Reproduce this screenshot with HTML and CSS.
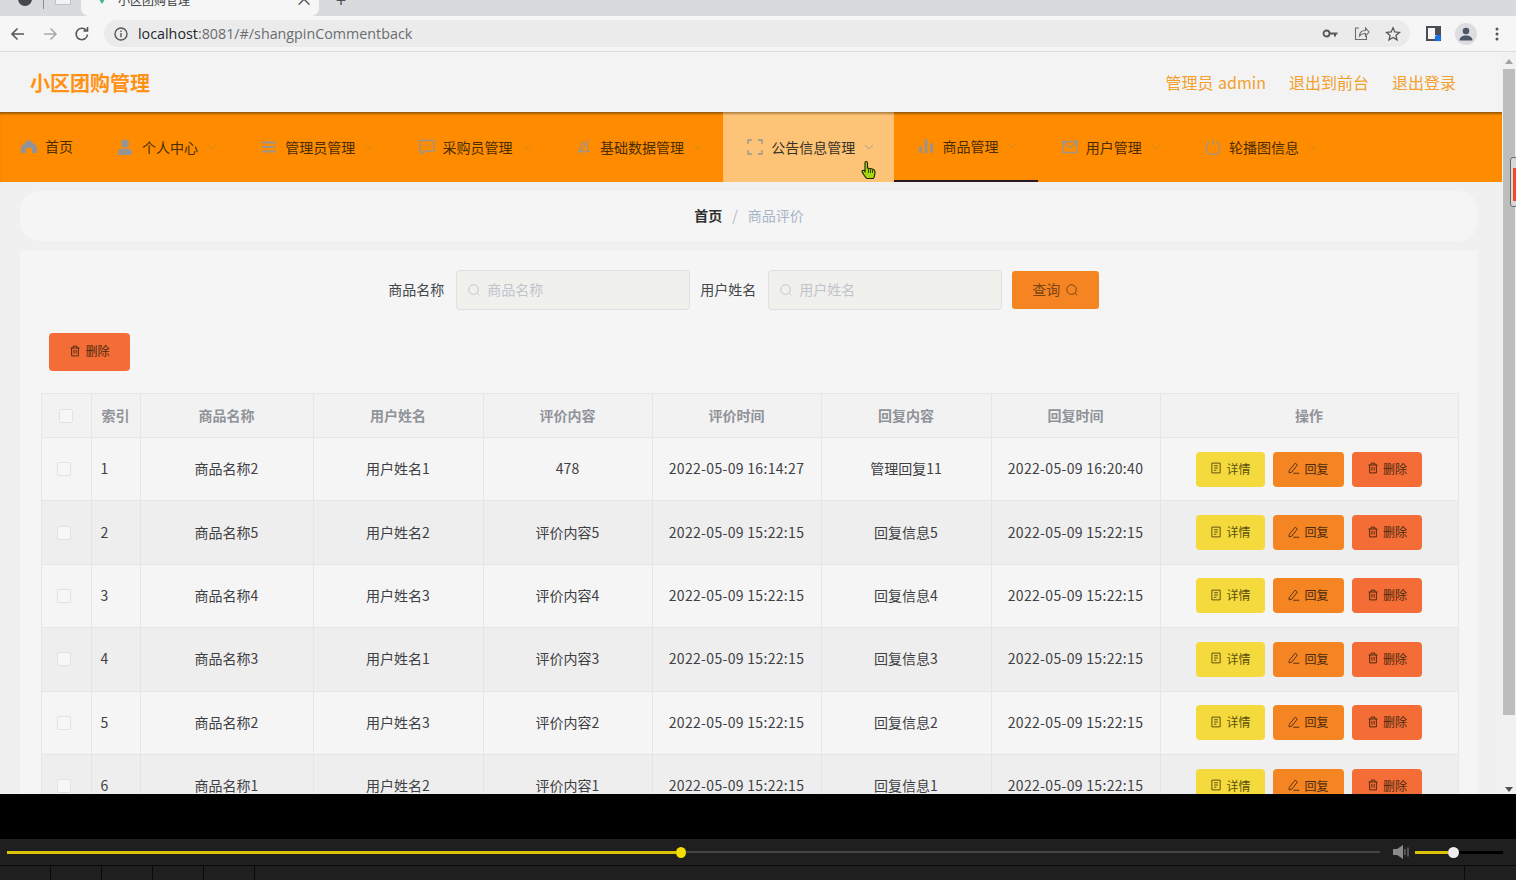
FILE: index.html
```html
<!DOCTYPE html>
<html lang="zh-CN">
<head>
<meta charset="utf-8">
<title>小区团购管理</title>
<link rel="stylesheet" href="styles.css">
</head>
<body>
<svg class="defs" width="0" height="0" aria-hidden="true">
  <symbol id="i-trash" viewBox="0 0 16 16"><path d="M2 4h12M5.500 4V1.500h5V4M3.500 4v10.500h9V4M6.500 6.500v5M9.500 6.500v5" fill="none" stroke="currentColor" stroke-width="1.300"/></symbol>
  <symbol id="i-doc" viewBox="0 0 16 16"><path d="M2.500 1.500h11v13h-11zM5.500 5h5M5.500 8h5M5.500 11h3" fill="none" stroke="currentColor" stroke-width="1.300"/></symbol>
  <symbol id="i-edit" viewBox="0 0 16 16"><path d="M1.500 11.500 9.500 1.500l3 2.500-7.500 9.500-3.500 1zM7 15h8" fill="none" stroke="currentColor" stroke-width="1.200"/></symbol>
  <symbol id="i-search" viewBox="0 0 16 16"><path d="M7.500 2a5.500 5.500 0 1 1 0 11 5.500 5.500 0 0 1 0-11zM11.500 11.500 14 14" fill="none" stroke="currentColor" stroke-width="1.100"/></symbol>
  <symbol id="i-chev" viewBox="0 0 10 6"><path d="M1 1l4 4 4-4" fill="none" stroke="currentColor" stroke-width="1"/></symbol>
</svg>

<div class="tabstrip">
  <svg class="strip-ico" width="16" height="16" viewBox="0 0 16 16"><circle cx="8" cy="-1" r="7" fill="#45484c"/></svg>
  <span class="strip-sep"></span>
  <span class="strip-page"></span>
  <div class="tab">
    <svg width="12" height="10" viewBox="0 0 12 10"><path d="M1 0h10L6 8z" fill="#41b883"/></svg>
    <span class="tab-title">小区团购管理</span>
    <span class="tab-x">×</span>
  </div>
  <span class="tab-plus">+</span>
</div>

<div class="toolbar">
  <svg class="tb-ico" width="18" height="18" viewBox="0 0 18 18"><path d="M15 9H3.500M8.500 3.500 3 9l5.500 5.500" fill="none" stroke="#55585c" stroke-width="1.600"/></svg>
  <svg class="tb-ico" width="18" height="18" viewBox="0 0 18 18"><path d="M3 9h11.500M9.500 3.500 15 9l-5.500 5.500" fill="none" stroke="#a8aaad" stroke-width="1.600"/></svg>
  <svg class="tb-ico" width="18" height="18" viewBox="0 0 18 18"><path d="M14.500 9.500a5.700 5.700 0 1 1-1.300-4.200M14.500 2v4h-4" fill="none" stroke="#55585c" stroke-width="1.600"/></svg>
  <div class="omnibox">
    <svg width="16" height="16" viewBox="0 0 16 16"><circle cx="8" cy="8" r="6" fill="none" stroke="#55585c" stroke-width="1.400"/><path d="M8 7v4.200M8 4.500v1.400" stroke="#55585c" stroke-width="1.400"/></svg>
    <span class="url"><span class="url-host">localhost</span>:8081/#/shangpinCommentback</span>
    <svg class="omni-key" width="16" height="16" viewBox="0 0 16 16"><path d="M7 6.500h8.500v2h-1.500v2h-2v-2H7z" fill="#55585c"/><circle cx="4.500" cy="7.500" r="3" fill="none" stroke="#55585c" stroke-width="1.800"/></svg>
    <svg class="omni-share" width="17" height="17" viewBox="0 0 17 17"><path d="M6 3H2.500v11.500h11V11M6.500 11c0-3.500 2.500-5.500 6-5.500V3l3.500 4-3.500 4V8.500C9.500 8.500 7.500 9.500 6.500 11z" fill="none" stroke="#6a6d71" stroke-width="1.100"/></svg>
    <svg class="omni-star" width="16" height="16" viewBox="0 0 16 16"><path d="M8 1.800 9.800 6l4.600.4-3.500 3 1.100 4.500L8 11.500l-4 2.400 1.100-4.500-3.500-3L6.200 6z" fill="none" stroke="#55585c" stroke-width="1.300"/></svg>
  </div>
  <div class="tb-right">
    <svg width="16" height="16" viewBox="0 0 16 16"><path d="M1 1h13v13H1z" fill="none" stroke="#4a4d51" stroke-width="2"/><path d="M9 1h5v8H9z" fill="#4a4d51"/><circle cx="12" cy="12" r="3.200" fill="#1a73e8"/></svg>
    <span class="avatar"><svg width="16" height="16" viewBox="0 0 16 16"><circle cx="8" cy="5" r="3.300" fill="#4d5666"/><path d="M1.500 14.500c0-3.500 3-5 6.500-5s6.500 1.500 6.500 5z" fill="#4d5666"/></svg></span>
    <svg width="4" height="14" viewBox="0 0 4 14"><circle cx="2" cy="2" r="1.500" fill="#55585c"/><circle cx="2" cy="7" r="1.500" fill="#55585c"/><circle cx="2" cy="12" r="1.500" fill="#55585c"/></svg>
  </div>
</div>

<div class="viewport">
  <div class="page">
    <header class="topbar">
      <div class="brand">小区团购管理</div>
      <div class="top-links">
        <span>管理员 admin</span>
        <span>退出到前台</span>
        <span>退出登录</span>
      </div>
    </header>

    <nav class="nav">
      <div class="nav-item nav-home">
        <svg class="nav-ico" viewBox="0 0 16 16"><path d="M8 1.500 16 8.500v6.500h-5v-5H5v5H0V8.500z" fill="currentColor"/></svg>
        <span class="nav-text">首页</span>
      </div>
      <div class="nav-item">
        <svg class="nav-ico" viewBox="0 0 16 16"><circle cx="7" cy="4.500" r="4" fill="currentColor"/><path d="M0 16v-3c0-2 2-3.500 4-3.500h6c2 0 4 1.500 4 3.500v3z" fill="currentColor"/></svg>
        <span class="nav-text">个人中心</span>
        <svg class="chev"><use href="#i-chev"/></svg>
      </div>
      <div class="nav-item">
        <svg class="nav-ico" viewBox="0 0 16 16"><path d="M1 2.500h14v2H1zM1 7h10v2H1zM1 11.500h14v2H1zM12 6l3 2-3 2z" fill="currentColor"/></svg>
        <span class="nav-text">管理员管理</span>
        <svg class="chev"><use href="#i-chev"/></svg>
      </div>
      <div class="nav-item">
        <svg class="nav-ico" viewBox="0 0 16 16"><path d="M1 1.500h14v10.500H6L2.500 15v-3H1z" fill="none" stroke="currentColor" stroke-width="1.300"/><path d="M4.500 6.500h1.200M7.400 6.500h1.200M10.300 6.500h1.200" stroke="currentColor" stroke-width="1.300"/></svg>
        <span class="nav-text">采购员管理</span>
        <svg class="chev"><use href="#i-chev"/></svg>
      </div>
      <div class="nav-item">
        <svg class="nav-ico" viewBox="0 0 16 16"><path d="M3 12.500c1.500-1.500 1.500-3 1.500-5 0-2.500 1.500-4.500 3.500-4.500s3.500 2 3.500 4.500c0 2 0 3.500 1.500 5zM6.500 14.500h3M2.500 15 13 1" fill="none" stroke="currentColor" stroke-width="1.200"/></svg>
        <span class="nav-text">基础数据管理</span>
        <svg class="chev"><use href="#i-chev"/></svg>
      </div>
      <div class="nav-item nav-hover">
        <svg class="nav-ico" viewBox="0 0 16 16"><path d="M1 5V1h4M11 1h4v4M15 11v4h-4M5 15H1v-4" fill="none" stroke="currentColor" stroke-width="1.300"/></svg>
        <span class="nav-text">公告信息管理</span>
        <svg class="chev"><use href="#i-chev"/></svg>
      </div>
      <div class="nav-item nav-active">
        <svg class="nav-ico" viewBox="0 0 16 16"><path d="M1 8h3v7H1zM6.500 1.500h3V15h-3zM12 5h3v10h-3z" fill="currentColor"/></svg>
        <span class="nav-text">商品管理</span>
        <svg class="chev"><use href="#i-chev"/></svg>
      </div>
      <div class="nav-item">
        <svg class="nav-ico" viewBox="0 0 16 16"><path d="M.7 2.500h14.600v11H.7zM1 3l7 6 7-6" fill="none" stroke="currentColor" stroke-width="1.300"/></svg>
        <span class="nav-text">用户管理</span>
        <svg class="chev"><use href="#i-chev"/></svg>
      </div>
      <div class="nav-item">
        <svg class="nav-ico" viewBox="0 0 16 16"><path d="M5 2.500a7 7 0 1 0 6 0M8 .5v6" fill="none" stroke="currentColor" stroke-width="1.300"/></svg>
        <span class="nav-text">轮播图信息</span>
        <svg class="chev"><use href="#i-chev"/></svg>
      </div>
    </nav>

    <main class="main">
      <div class="crumbs"><b>首页</b><i>/</i><span>商品评价</span></div>
      <section class="panel">
        <form class="search">
          <label>商品名称</label>
          <div class="field"><svg><use href="#i-search"/></svg><span>商品名称</span></div>
          <label>用户姓名</label>
          <div class="field"><svg><use href="#i-search"/></svg><span>用户姓名</span></div>
          <div class="query"><span>查询</span><svg><use href="#i-search"/></svg></div>
        </form>
        <div class="btn btn-del btn-batch"><svg><use href="#i-trash"/></svg>删除</div>
        <table class="grid">
          <colgroup><col class="c-check"><col class="c-idx"><col class="c-name"><col class="c-user"><col class="c-text"><col class="c-text"><col class="c-user"><col class="c-text"><col class="c-ops"></colgroup>
          <thead>
            <tr><th class="th-check"><span class="check check-h"></span></th><th>索引</th><th>商品名称</th><th>用户姓名</th><th>评价内容</th><th>评价时间</th><th>回复内容</th><th>回复时间</th><th>操作</th></tr>
          </thead>
          <tbody>
            <tr><td class="td-check"><span class="check"></span></td><td class="td-idx">1</td><td>商品名称2</td><td>用户姓名1</td><td>478</td><td class="td-date">2022-05-09 16:14:27</td><td>管理回复11</td><td class="td-date">2022-05-09 16:20:40</td><td class="td-ops"><div class="ops"><div class="btn btn-info"><svg><use href="#i-doc"/></svg>详情</div><div class="btn btn-reply"><svg><use href="#i-edit"/></svg>回复</div><div class="btn btn-del"><svg><use href="#i-trash"/></svg>删除</div></div></td></tr>
            <tr><td class="td-check"><span class="check"></span></td><td class="td-idx">2</td><td>商品名称5</td><td>用户姓名2</td><td>评价内容5</td><td class="td-date">2022-05-09 15:22:15</td><td>回复信息5</td><td class="td-date">2022-05-09 15:22:15</td><td class="td-ops"><div class="ops"><div class="btn btn-info"><svg><use href="#i-doc"/></svg>详情</div><div class="btn btn-reply"><svg><use href="#i-edit"/></svg>回复</div><div class="btn btn-del"><svg><use href="#i-trash"/></svg>删除</div></div></td></tr>
            <tr><td class="td-check"><span class="check"></span></td><td class="td-idx">3</td><td>商品名称4</td><td>用户姓名3</td><td>评价内容4</td><td class="td-date">2022-05-09 15:22:15</td><td>回复信息4</td><td class="td-date">2022-05-09 15:22:15</td><td class="td-ops"><div class="ops"><div class="btn btn-info"><svg><use href="#i-doc"/></svg>详情</div><div class="btn btn-reply"><svg><use href="#i-edit"/></svg>回复</div><div class="btn btn-del"><svg><use href="#i-trash"/></svg>删除</div></div></td></tr>
            <tr><td class="td-check"><span class="check"></span></td><td class="td-idx">4</td><td>商品名称3</td><td>用户姓名1</td><td>评价内容3</td><td class="td-date">2022-05-09 15:22:15</td><td>回复信息3</td><td class="td-date">2022-05-09 15:22:15</td><td class="td-ops"><div class="ops"><div class="btn btn-info"><svg><use href="#i-doc"/></svg>详情</div><div class="btn btn-reply"><svg><use href="#i-edit"/></svg>回复</div><div class="btn btn-del"><svg><use href="#i-trash"/></svg>删除</div></div></td></tr>
            <tr><td class="td-check"><span class="check"></span></td><td class="td-idx">5</td><td>商品名称2</td><td>用户姓名3</td><td>评价内容2</td><td class="td-date">2022-05-09 15:22:15</td><td>回复信息2</td><td class="td-date">2022-05-09 15:22:15</td><td class="td-ops"><div class="ops"><div class="btn btn-info"><svg><use href="#i-doc"/></svg>详情</div><div class="btn btn-reply"><svg><use href="#i-edit"/></svg>回复</div><div class="btn btn-del"><svg><use href="#i-trash"/></svg>删除</div></div></td></tr>
            <tr><td class="td-check"><span class="check"></span></td><td class="td-idx">6</td><td>商品名称1</td><td>用户姓名2</td><td>评价内容1</td><td class="td-date">2022-05-09 15:22:15</td><td>回复信息1</td><td class="td-date">2022-05-09 15:22:15</td><td class="td-ops"><div class="ops"><div class="btn btn-info"><svg><use href="#i-doc"/></svg>详情</div><div class="btn btn-reply"><svg><use href="#i-edit"/></svg>回复</div><div class="btn btn-del"><svg><use href="#i-trash"/></svg>删除</div></div></td></tr>
          </tbody>
        </table>
      </section>
    </main>
    <svg class="cursor" width="16" height="20" viewBox="0 0 16 20"><path d="M5 1.500c1 0 1.500.5 1.500 1.500v5l5 1c1.500.5 2.500 1 2.500 3 0 3-1 6.500-2 6.500H6C5 18.500 1.500 13 1 11.500c0-1 1-1.500 2-1L4 11.500V3c0-1 .2-1.500 1-1.500z" fill="#a6d60e" stroke="#1c2400" stroke-width="1.100"/><path d="M7.500 9v4M9.500 9.500v3.500M11.500 10v3" stroke="#1c2400" stroke-width=".8"/></svg>
  </div>
  <div class="scrollbar">
    <span class="sb-up"></span>
    <span class="sb-thumb"></span>
    <span class="sb-down"></span>
  </div>
  <div class="edge-widget"><span></span></div>
</div>

<div class="video-gap"></div>
<div class="player">
  <div class="seek"><span class="seek-done"></span><span class="seek-knob"></span><span class="seek-rest"></span></div>
  <svg class="vol-ico" width="16" height="14" viewBox="0 0 16 14"><path d="M0 4h4l6-4v14l-6-4H0z" fill="#8a8a8a"/><path d="M12 4v6M15 2.500v9" stroke="#8a8a8a"/></svg>
  <div class="vol"><span class="vol-done"></span><span class="vol-knob"></span><span class="vol-rest"></span></div>
</div>
<div class="dock"><span></span><span></span><span></span><span></span><span></span><em></em></div>
</body>
</html>
```

FILE: styles.css
```css
* { box-sizing: border-box; }
html, body { margin: 0; padding: 0; }
body {
  width: 1516px;
  height: 880px;
  overflow: hidden;
  display: flex;
  flex-direction: column;
  font-family: "Noto Sans CJK SC", "Noto Sans", sans-serif;
  color: #303133;
  background: #000;
}
.defs { position: absolute; }

/* Browser chrome */
.tabstrip {
  height: 16px;
  flex: none;
  display: flex;
  align-items: flex-start;
  background: #d9dadd;
  overflow: hidden;
  position: relative;
}
.strip-ico { margin-left: 17px; flex: none; }
.strip-sep { width: 1px; height: 9px; background: #8b8d90; margin-left: 10px; }
.strip-page { width: 16px; height: 5px; margin-left: 11px; background: #f2f2f2; border: 1px solid #c3c4c6; border-top: 0; }
.tab {
  width: 238px;
  height: 16px;
  margin-left: 10px;
  background: #f6f6f6;
  border-radius: 0 0 8px 8px;
  display: flex;
  align-items: flex-start;
  padding-left: 15px;
}
.tab svg { margin-top: -4px; flex: none; }
.tab-title { margin: -9px 0 0 10px; font-size: 12px; line-height: 18px; color: #3c4043; }
.tab-x { margin: -11px 0 0 auto; padding-right: 6px; font-size: 18px; line-height: 18px; color: #3c4043; }
.tab-plus { margin: -10px 0 0 17px; font-size: 18px; line-height: 18px; color: #4a4d51; }

.toolbar {
  height: 36px;
  flex: none;
  display: flex;
  align-items: center;
  background: #f6f6f6;
  border-bottom: 1px solid #dcdcdc;
  padding-left: 9px;
}
.tb-ico { margin-right: 14px; flex: none; }
.omnibox {
  width: 1306px;
  height: 27px;
  margin-left: -1px;
  border-radius: 14px;
  background: #ebebeb;
  display: flex;
  align-items: center;
  padding-left: 9px;
  padding-right: 9px;
}
.url { margin-left: 9px; font-family: "Open Sans", sans-serif; font-size: 14.3px; color: #6a6d71; }
.url-host { color: #25282c; }
.omni-key { margin-left: auto; }
.omni-share { margin-left: 15px; }
.omni-star { margin-left: 15px; }
.tb-right { display: flex; align-items: center; margin-left: 16px; }
.avatar {
  width: 22px; height: 22px; margin-left: 13px; margin-right: 18px;
  border-radius: 50%; background: #dcdde0;
  display: flex; align-items: center; justify-content: center;
}

/* Page viewport */
.viewport {
  height: 742px;
  flex: none;
  display: flex;
  overflow: hidden;
  position: relative;
}
.page { width: 1502px; flex: none; background: #f0f0f0; position: relative; }
.topbar {
  height: 60px;
  background: #f3f3f3;
  display: flex;
  align-items: center;
  justify-content: space-between;
  padding: 0 46px 0 30px;
}
.brand { font-size: 20px; font-weight: 700; color: #ff9214; }
.top-links { display: flex; gap: 23px; font-size: 16px; color: #f2a02e; word-spacing: 1px; }

.nav {
  height: 70px;
  background: #ff8c00;
  display: flex;
  box-shadow: inset 0 3px 2px -1px rgba(90, 60, 10, .6);
}
.nav-item {
  display: flex;
  align-items: center;
  padding: 0 15.3px 0 24px;
  font-size: 14px;
  color: #99958e;
  flex: none;
}
.nav-ico { width: 16px; height: 16px; margin-right: 8px; flex: none; }
.nav-text { color: #4a2d00; white-space: nowrap; }
.chev { width: 10px; height: 6px; margin-left: 9px; margin-right: 5px; color: #d08a20; flex: none; }
.nav-home { padding: 0 20px 3px 21px; width: 94px; color: #909399; }
.nav-hover { background: #fdc478; box-shadow: inset 0 3px 2px -1px rgba(90, 60, 10, .45); }
.nav-hover .nav-text { color: #3a3226; }
.nav-hover .chev { color: #a9a49a; }
.nav-active { border-bottom: 2px solid #2a1a20; }

.main { padding: 9px 24px 0 20px; }
.crumbs {
  height: 50px;
  padding-bottom: 2px;
  background: #f5f5f5;
  border-radius: 20px;
  display: flex;
  align-items: center;
  justify-content: center;
  font-size: 14px;
}
.crumbs b { color: #303133; }
.crumbs i { margin: 0 10px; color: #b0b6bf; font-style: normal; }
.crumbs span { color: #a7b4c6; }

.panel { margin-top: 9px; background: #f5f5f5; padding: 20px 20px 0 20.5px; }
.search {
  height: 40px;
  display: flex;
  align-items: center;
  justify-content: center;
  padding-right: 11px;
  font-size: 14px;
  color: #44464a;
}
.search label { margin-top: -2px; }
.field {
  width: 234px;
  height: 40px;
  margin: 0 10px 0 12px;
  background: #f0f0ec;
  border: 1px solid #e0e0e0;
  border-radius: 4px;
  display: flex;
  align-items: center;
  padding-left: 10px;
  color: #c0c4cc;
}
.field span { margin-top: -2px; }
.field svg { width: 14px; height: 14px; margin-right: 6px; }
.query {
  width: 87px;
  height: 38px;
  background: #f58522;
  border-radius: 3px;
  display: flex;
  align-items: center;
  justify-content: center;
  color: #7a4413;
  font-size: 14px;
}
.query span { margin-top: -2px; }
.query svg { width: 14px; height: 14px; margin-left: 5px; }

.btn {
  height: 35px;
  padding-bottom: 2px;
  border-radius: 4px;
  display: flex;
  align-items: center;
  justify-content: center;
  font-size: 12px;
  color: #4a2a10;
}
.btn svg { width: 12px; height: 12px; margin-right: 4px; }
.btn-batch { width: 81px; height: 38px; margin: 23px 0 22px 8.5px; padding-bottom: 3px; }
.btn-info { width: 69px; background: #f4da3c; color: #5b5012; }
.btn-reply { width: 71px; background: #f58522; }
.btn-del { width: 70px; background: #f46d36; }
.btn-batch.btn-del { width: 81px; }

.grid {
  width: 1417px;
  table-layout: fixed;
  border-collapse: collapse;
  font-size: 14px;
  color: #3e4044;
}
.c-check { width: 50px; }
.c-idx { width: 49px; }
.c-name { width: 173px; }
.c-user { width: 170px; }
.c-text { width: 169px; }
.c-ops { width: 298px; }
.grid th {
  height: 44px;
  padding: 0 0 2px;
  background: #f2f2f2;
  border: 1px solid #e6e6e6;
  color: #909399;
  font-weight: 700;
  text-align: center;
}
.grid td {
  height: 63.4px;
  padding: 0 0 2px;
  border: 1px solid #e6e6e6;
  text-align: center;
}
.grid tbody tr:nth-child(even) td { background: #eeeeee; }
.grid .th-check { padding: 0; }
.grid .td-idx { text-align: left; padding-left: 9px; }
.grid .td-check { text-align: left; padding: 0 0 0 15px; }
.grid .td-ops { padding: 0; }
.td-date { letter-spacing: .32px; }
.check {
  display: block;
  width: 14px;
  height: 14px;
  background: #f7f7f7;
  border: 1px solid #e2e2e2;
  border-radius: 2px;
}
.check-h { margin: 0 auto 0 17px; }
.ops { display: flex; justify-content: center; gap: 8px; }

/* Scrollbar */
.scrollbar { width: 14px; flex: none; background: #f1f1f1; display: flex; flex-direction: column; align-items: center; }
.sb-up { width: 0; height: 0; margin: 7px 0 5px; border: 4px solid transparent; border-top: 0; border-bottom: 5px solid #a3a3a3; }
.sb-thumb { width: 12px; height: 646px; background: #bdbdbd; }
.sb-down { width: 0; height: 0; margin-top: 72px; border: 4px solid transparent; border-bottom: 0; border-top: 5px solid #505050; }
.edge-widget {
  position: absolute;
  left: 1510px;
  top: 105px;
  width: 8px;
  height: 50px;
  border: 1px solid #6a6a6a;
  border-radius: 3px;
  background: #d8d8d8;
  padding: 10px 0 5px 2px;
}
.edge-widget span { display: block; height: 100%; background: #ee4a2a; }
.cursor { position: absolute; left: 861px; top: 108px; }

/* Video player bar */
.video-gap { height: 45px; flex: none; background: #000; }
.player {
  height: 26px;
  flex: none;
  background: #1f1f1f;
  display: flex;
  align-items: center;
  padding-left: 7px;
}
.seek { width: 1373px; display: flex; align-items: center; }
.seek-done { width: 669px; height: 3px; background: #dcc400; }
.seek-knob { width: 10px; height: 11px; border-radius: 50%; background: #f5de00; }
.seek-rest { flex: 1; height: 2px; background: #444; }
.vol-ico { margin-left: 13px; flex: none; }
.vol { width: 88px; margin-left: 6px; display: flex; align-items: center; }
.vol-done { width: 33px; height: 3px; background: #dcc400; }
.vol-knob { width: 11px; height: 11px; border-radius: 50%; background: #eee; }
.vol-rest { flex: 1; height: 3px; background: #000; }
.dock { height: 15px; flex: none; background: #1f1f1f; border-top: 1px solid #0a0a0a; display: flex; }
.dock span { width: 51px; border-right: 1px solid #0a0a0a; }
.dock em { width: 52px; margin-left: auto; border-left: 1px solid #0a0a0a; }
```
